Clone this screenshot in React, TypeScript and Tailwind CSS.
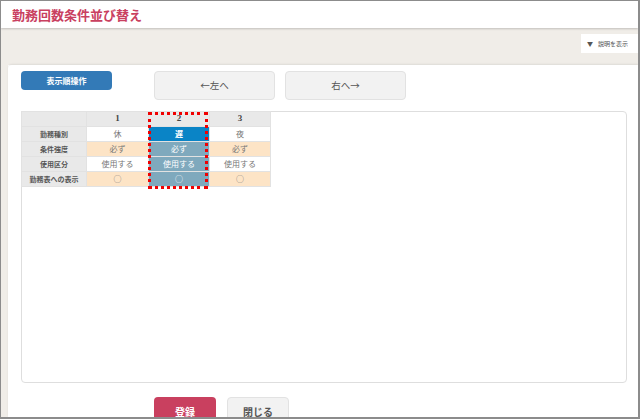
const font = { fontFamily: '"Noto Sans CJK JP", "Liberation Sans", sans-serif' };

const rows = [
  { label: "勤務種別", cells: ["休", "遅", "夜"], bg: "bg-white", sel: "bg-[#0a84c6] text-white font-bold" },
  { label: "条件強度", cells: ["必ず", "必ず", "必ず"], bg: "bg-[#fde4c6]", sel: "bg-[#7fa9bd] text-white" },
  { label: "使用区分", cells: ["使用する", "使用する", "使用する"], bg: "bg-white", sel: "bg-[#7fa9bd] text-white" },
  { label: "勤務表への表示", cells: ["○", "○", "○"], bg: "bg-[#fde4c6]", sel: "bg-[#7fa9bd] text-white" },
];

export default function App() {
  return (
    <div style={font} className="w-[640px] h-[419px] overflow-hidden border-b-2 border-r-2 border-l border-t border-[#8c8c8c] bg-white flex flex-col">
      <header className="h-[27px] shrink-0 bg-white pl-[11px] flex items-center shadow-[0_1px_2px_rgba(0,0,0,0.2)] z-10">
        <h1 className="text-[13px] leading-none font-bold text-[#c9405f]">勤務回数条件並び替え</h1>
      </header>
      <div className="h-[37px] shrink-0 bg-[#f0ede8] flex justify-end items-start pt-[6px]">
        <div className="w-[57px] h-[19px] bg-white flex items-center pl-[6px] gap-[5px] text-[6px] text-[#555]">
          <span className="text-[6px] leading-none">▼</span>
          <span>説明を表示</span>
        </div>
      </div>
      <div className="flex-1 flex min-h-0">
        <div className="w-[7px] shrink-0 bg-[#f0ede8]"></div>
        <main className="flex-1 bg-white pl-[13px] pr-[11px] pt-[6px] rounded-tl-sm shadow-[0_-1px_2px_rgba(0,0,0,0.08)]">
          <div className="flex items-start h-[40px]">
            <div className="w-[91px] h-[19px] bg-[#337ab7] rounded-sm text-white text-[8px] font-bold flex items-center justify-center">表示順操作</div>
            <button className="ml-[42px] w-[121px] h-[29px] bg-[#f2f2f2] border border-[#e2e2e2] rounded-sm text-[9.5px] text-[#555]">←左へ</button>
            <button className="ml-[10px] w-[121px] h-[29px] bg-[#f2f2f2] border border-[#e2e2e2] rounded-sm text-[9.5px] text-[#555]">右へ→</button>
          </div>
          <section className="h-[272px] border border-[#dedede] rounded-sm">
            <div className="relative w-[249px] -ml-px -mt-px">
              <table className="w-[249px] table-fixed border-collapse text-[8px] text-[#777]">
                <colgroup>
                  <col className="w-[65px]" />
                  <col className="w-[62px]" />
                  <col className="w-[61px]" />
                  <col className="w-[61px]" />
                </colgroup>
                <thead>
                  <tr className="h-[15px] bg-[#e9e9e9]">
                    <th className="border border-[#e2e2e2]"></th>
                    {[1, 2, 3].map((n) => (
                      <th key={n} style={{ fontFamily: '"Liberation Serif", serif' }} className="border border-[#e2e2e2] text-[9px] text-[#444] font-bold">{n}</th>
                    ))}
                  </tr>
                </thead>
                <tbody>
                  {rows.map((r) => (
                    <tr key={r.label} className="h-[15px]">
                      <th className="bg-[#e9e9e9] border border-[#e2e2e2] font-bold text-[#555] text-[7px] p-0">{r.label}</th>
                      {r.cells.map((c, i) => (
                        <td key={i} className={`border border-[#e2e2e2] text-center p-0 leading-none ${i === 1 ? r.sel : r.bg}`}>{c}</td>
                      ))}
                    </tr>
                  ))}
                </tbody>
              </table>
              <div className="absolute left-[127px] top-px w-[60px] h-[77px] border-[3px] border-dotted border-[#f00000] pointer-events-none"></div>
            </div>
          </section>
          <div className="flex mt-[14px] ml-[133px] gap-[11px]">
            <button className="w-[62px] h-[28px] bg-[#c9405f] rounded-sm text-white text-[10px] font-bold">登録</button>
            <button className="w-[62px] h-[28px] bg-[#f2f2f2] border border-[#e2e2e2] rounded-sm text-[10px] font-bold text-[#555]">閉じる</button>
          </div>
        </main>
      </div>
    </div>
  );
}
